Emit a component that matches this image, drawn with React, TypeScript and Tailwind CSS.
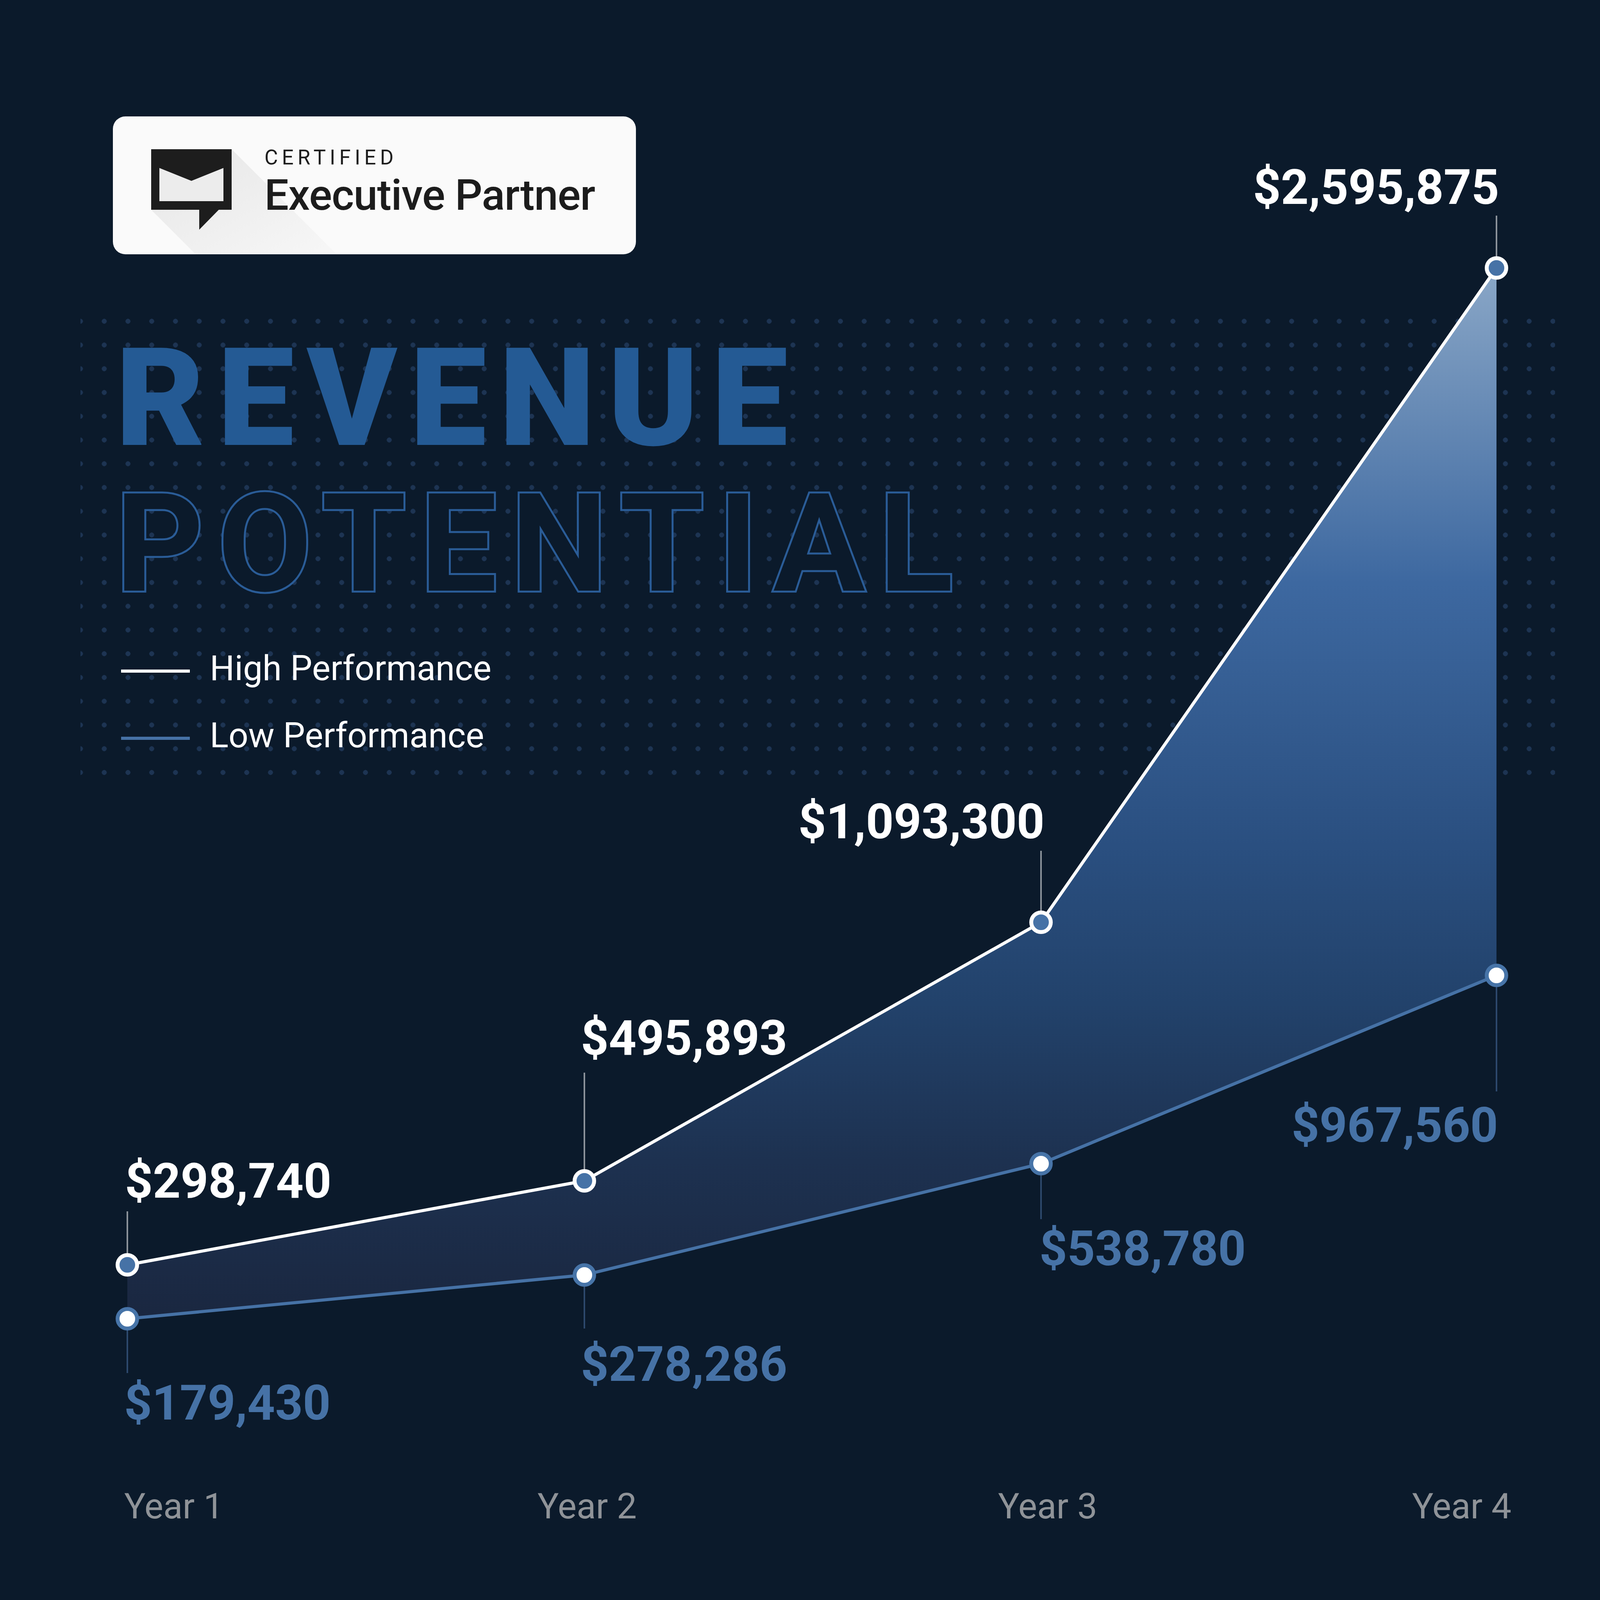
import React from 'react';

const xs = [326, 1496, 2665, 3831];
const high = [3238, 3023, 2361, 686];
const low = [3376, 3264, 2979, 2497];
const highLeaderTop = [3101, 2746, 2178, 552];
const lowLeaderBottom = [3515, 3401, 3121, 2794];

const labels = [
  { text: '$298,740', x: 320, y: 3066, anchor: 'start', fill: '#ffffff' },
  { text: '$179,430', x: 318, y: 3634, anchor: 'start', fill: '#4672a6' },
  { text: '$495,893', x: 1487, y: 2700, anchor: 'start', fill: '#ffffff' },
  { text: '$278,286', x: 1487, y: 3535, anchor: 'start', fill: '#4672a6' },
  { text: '$1,093,300', x: 2674, y: 2146, anchor: 'end', fill: '#ffffff' },
  { text: '$538,780', x: 2661, y: 3239, anchor: 'start', fill: '#4672a6' },
  { text: '$2,595,875', x: 3838, y: 522, anchor: 'end', fill: '#ffffff' },
  { text: '$967,560', x: 3835, y: 2923, anchor: 'end', fill: '#4672a6' },
];

const years = [
  { text: 'Year 1', x: 318 },
  { text: 'Year 2', x: 1376 },
  { text: 'Year 3', x: 2555 },
  { text: 'Year 4', x: 3615 },
];

const PartnerLogo = () => (
  <svg width="206" height="270" viewBox="0 0 206 270" className="overflow-visible shrink-0">
    <defs>
      <linearGradient id="longShadow" x1="0" y1="0" x2="1" y2="1">
        <stop offset="0" stopColor="#e6e6e6" />
        <stop offset="1" stopColor="#f7f7f7" />
      </linearGradient>
    </defs>
    {/* long shadow */}
    <polygon points="206,0 476,270 115,270 0,155" fill="url(#longShadow)" />
    <rect x="0" y="0" width="206" height="155" fill="#1d1d1d" />
    <polygon points="21,48 103,81 185,48 185,133 21,133" fill="#ececec" />
    <polygon points="123,154 174,154 123,206" fill="#1d1d1d" />
  </svg>
);

const Legend = () => (
  <div className="flex flex-col gap-[83px] mt-[99px] pl-[104px]">
    <div className="flex items-start">
      <div className="w-[176px] h-[8px] bg-white mt-[48px]" />
      <span className="ml-[51px] text-[89px] leading-none text-white">High Performance</span>
    </div>
    <div className="flex items-start">
      <div className="w-[176px] h-[8px] bg-[#4672a6] mt-[48px]" />
      <span className="ml-[51px] text-[89px] leading-none text-white">Low Performance</span>
    </div>
  </div>
);

const Chart = () => {
  const area =
    xs.map((x, i) => `${x},${high[i]}`).join(' ') +
    ' ' +
    xs
      .map((x, i) => `${x},${low[i]}`)
      .reverse()
      .join(' ');
  return (
    <svg
      className="absolute inset-0 pointer-events-none"
      width="4164"
      height="4164"
      viewBox="0 0 4164 4164"
    >
      <defs>
        <linearGradient id="areaFill" gradientUnits="userSpaceOnUse" x1="0" y1="686" x2="0" y2="3376">
          <stop offset="0" stopColor="#8aa7c7" />
          <stop offset="0.3" stopColor="#3d68a0" />
          <stop offset="0.55" stopColor="#2a4f80" />
          <stop offset="0.7" stopColor="#22426b" />
          <stop offset="0.85" stopColor="#1d3150" />
          <stop offset="1" stopColor="#1a2740" />
        </linearGradient>
      </defs>
      <polygon points={area} fill="url(#areaFill)" />
      {xs.map((x, i) => (
        <g key={`lead-${i}`}>
          <line x1={x} y1={highLeaderTop[i]} x2={x} y2={high[i] - 28} stroke="#8c939b" strokeWidth="4" />
          <line x1={x} y1={low[i] + 28} x2={x} y2={lowLeaderBottom[i]} stroke="#2d496d" strokeWidth="4" />
        </g>
      ))}
      <polyline
        points={xs.map((x, i) => `${x},${low[i]}`).join(' ')}
        fill="none"
        stroke="#4672a6"
        strokeWidth="8"
        strokeLinejoin="round"
      />
      <polyline
        points={xs.map((x, i) => `${x},${high[i]}`).join(' ')}
        fill="none"
        stroke="#ffffff"
        strokeWidth="8"
        strokeLinejoin="round"
      />
      {xs.map((x, i) => (
        <g key={`pt-${i}`}>
          <circle cx={x} cy={high[i]} r="25" fill="#4672a6" stroke="#ffffff" strokeWidth="10" />
          <circle cx={x} cy={low[i]} r="25" fill="#ffffff" stroke="#4774a8" strokeWidth="10" />
        </g>
      ))}
      {labels.map((l) => (
        <text
          key={l.text}
          x={l.x}
          y={l.y}
          textAnchor={l.anchor as 'start' | 'end'}
          fill={l.fill}
          fontFamily="Roboto, sans-serif"
          fontWeight="700"
          fontSize="124"
        >
          {l.text}
        </text>
      ))}
      {years.map((y) => (
        <text
          key={y.text}
          x={y.x}
          y={3887}
          fill="#8f9398"
          fontFamily="Roboto, sans-serif"
          fontWeight="400"
          fontSize="91"
        >
          {y.text}
        </text>
      ))}
    </svg>
  );
};

export default function App() {
  return (
    <div className="relative w-[4164px] h-[4164px] overflow-hidden bg-[#0b1a2b] font-['Roboto',sans-serif]">
      {/* certified badge */}
      <div className="ml-[289px] pt-[298px]">
        <div className="flex items-start w-[1339px] h-[353px] rounded-[32px] bg-[#fafafa] overflow-hidden">
          <div className="mt-[84px] ml-[98px]">
            <PartnerLogo />
          </div>
          <div className="relative mt-[79px] ml-[84px] flex flex-col">
            <span className="text-[53px] leading-none tracking-[0.19em] text-[#1e1e1e]">CERTIFIED</span>
            <span className="mt-[15px] text-[110px] leading-none font-medium tracking-[-0.01em] text-[#1c1c1c]">
              Executive Partner
            </span>
          </div>
        </div>
      </div>

      {/* title + legend over dotted field */}
      <div className="mt-[141px] ml-[206px] w-[3775px] h-[1215px] pt-[52px] bg-[radial-gradient(circle,#1d3453_6px,transparent_6.5px)] bg-[length:60.8px_60.8px] bg-[position:-30.4px_0px]">
        <div className="pl-[90px] flex flex-col">
          <h1 className="text-[350px] leading-none font-black tracking-[0.093em] text-[#245a94]">REVENUE</h1>
          <h2 className="mt-[23px] text-[350px] leading-none font-bold tracking-[0.102em] text-[#0b1a2b] [-webkit-text-stroke:10px_#2a5c97] [paint-order:stroke_fill]">
            POTENTIAL
          </h2>
        </div>
        <Legend />
      </div>

      <Chart />
    </div>
  );
}
